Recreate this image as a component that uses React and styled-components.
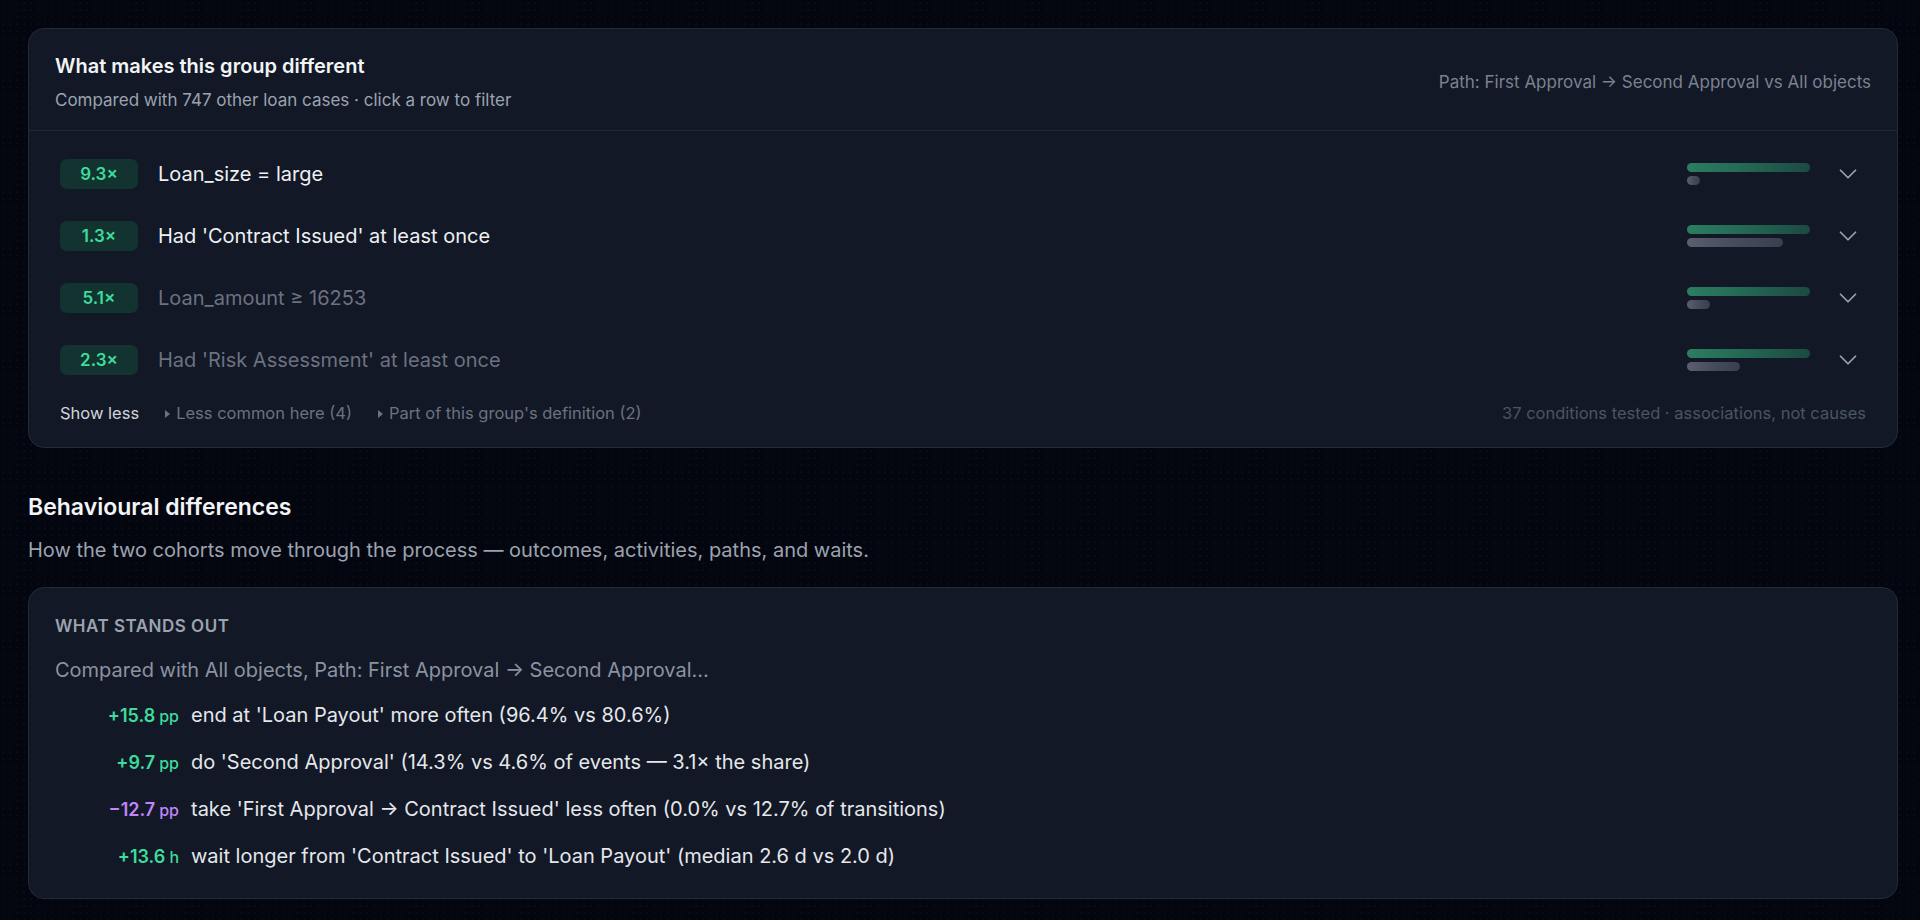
import React from "react"
import styled, { createGlobalStyle } from "styled-components"
import { ChevronDown } from "lucide-react"

const GlobalStyle = createGlobalStyle`
  * { box-sizing: border-box; }
  body {
    margin: 0;
    background-color: #03060f;
    background-image: radial-gradient(rgba(255, 255, 255, 0.03) 1px, transparent 1px);
    background-size: 7px 7px;
    font-family: Inter, Lato, "Noto Sans", sans-serif;
    color: #e5e7eb;
  }
`;

const Page = styled.main`
  padding: 28px 22px 28px 28px;
`;

const Card = styled.section`
  background: #121826;
  border: 1px solid #222b3a;
  border-radius: 16px;
`;

const Header = styled.header`
  display: flex;
  justify-content: space-between;
  align-items: center;
  padding: 24px 26px 20px 26px;
  border-bottom: 1px solid #1f2837;
`;

const Title = styled.h2`
  margin: 0;
  font-size: 20px;
  line-height: 26px;
  font-weight: 600;
  color: #f3f4f6;
`;

const Sub = styled.p`
  margin: 11px 0 0;
  font-size: 17px;
  line-height: 20px;
  color: #9ca3af;
`;

const Context = styled.span`
  font-size: 17px;
  color: #7b8290;
`;

const List = styled.div`
  padding-top: 12px;
`;

const Row = styled.div`
  display: flex;
  align-items: center;
  height: 62px;
  padding: 0 34px 0 31px;
  cursor: pointer;
`;

const Badge = styled.span`
  width: 78px;
  height: 30px;
  border-radius: 7px;
  background: #12332f;
  color: #3ddc9c;
  font-size: 17px;
  font-weight: 600;
  display: flex;
  align-items: center;
  justify-content: center;
  margin-right: 20px;
  flex-shrink: 0;
`;

const Label = styled.span`
  flex: 1;
  font-size: 20px;
  color: ${(p) => (p.$dim ? "#6b7280" : "#eef0f3")};
`;

const Bars = styled.div`
  width: 123px;
  display: flex;
  flex-direction: column;
  gap: 4px;
  margin-right: 23px;
`;

const Bar = styled.div`
  height: 9px;
  border-radius: 5px;
  background: ${(p) =>
    p.$kind === "group"
      ? "linear-gradient(90deg, #2b7d61 0%, #256b56 40%, #1c4a42 100%)"
      : "linear-gradient(90deg, #5a5f6f 0%, #474c5c 50%, #3a3f4f 100%)"};
`;

const Chevron = styled(ChevronDown)`
  color: #9ca3af;
  flex-shrink: 0;
`;

const Footer = styled.div`
  display: flex;
  align-items: center;
  gap: 26px;
  padding: 10px 31px 22px 31px;
  font-size: 16.5px;
  line-height: 24px;
`;

const ShowLess = styled.span`
  color: #d1d5db;
`;

const Toggle = styled.span`
  color: #6b7280;
  &::before {
    content: "";
    display: inline-block;
    border-left: 5px solid #6b7280;
    border-top: 4px solid transparent;
    border-bottom: 4px solid transparent;
    margin-right: 6px;
    vertical-align: 1px;
  }
`;

const Note = styled.span`
  margin-left: auto;
  color: #4b5563;
`;

const SectionTitle = styled.h2`
  margin: 45px 0 0;
  font-size: 23px;
  line-height: 28px;
  font-weight: 600;
  color: #f3f4f6;
`;

const SectionSub = styled.p`
  margin: 16px 0 24px;
  font-size: 20px;
  line-height: 26px;
  color: #9ca3af;
`;

const OutCard = styled(Card)`
  padding: 28px 26px 27px;
`;

const Eyebrow = styled.div`
  font-size: 17px;
  line-height: 20px;
  font-weight: 600;
  letter-spacing: 0.5px;
  color: #9ca3af;
`;

const Lead = styled.p`
  margin: 21px 0 18px;
  font-size: 20px;
  line-height: 26px;
  color: #8b93a1;
`;

const Items = styled.ul`
  list-style: none;
  margin: 0;
  padding: 0;
  display: flex;
  flex-direction: column;
  gap: 18px;
`;

const Item = styled.li`
  display: flex;
  align-items: baseline;
  gap: 12px;
  line-height: 28px;
`;

const Delta = styled.span`
  width: 124px;
  text-align: right;
  font-size: 18px;
  font-weight: 600;
  color: ${(p) => (p.$neg ? "#c084fc" : "#3ddc9c")};
`;

const Unit = styled.span`
  font-size: 16px;
  font-weight: 500;
  margin-left: 4px;
`;

const Text = styled.span`
  font-size: 20px;
  color: #e5e7eb;
`;

const rows = [
  { lift: "9.3×", label: "Loan_size = large", other: 13 },
  { lift: "1.3×", label: "Had 'Contract Issued' at least once", other: 96 },
  { lift: "5.1×", label: "Loan_amount ≥ 16253", other: 23, dim: true },
  { lift: "2.3×", label: "Had 'Risk Assessment' at least once", other: 53, dim: true },
]

const items = [
  { v: "+15.8", u: "pp", t: "end at 'Loan Payout' more often (96.4% vs 80.6%)" },
  { v: "+9.7", u: "pp", t: "do 'Second Approval' (14.3% vs 4.6% of events — 3.1× the share)" },
  { v: "−12.7", u: "pp", t: "take 'First Approval → Contract Issued' less often (0.0% vs 12.7% of transitions)", neg: true },
  { v: "+13.6", u: "h", t: "wait longer from 'Contract Issued' to 'Loan Payout' (median 2.6 d vs 2.0 d)" },
]

export default function App() {
  return (
    <>
      <GlobalStyle />
      <Page>
        <Card>
          <Header>
            <div>
              <Title>What makes this group different</Title>
              <Sub>Compared with 747 other loan cases · click a row to filter</Sub>
            </div>
            <Context>Path: First Approval → Second Approval vs All objects</Context>
          </Header>
          <List>
            {rows.map((r) => (
              <Row key={r.label}>
                <Badge>{r.lift}</Badge>
                <Label $dim={r.dim}>{r.label}</Label>
                <Bars>
                  <Bar $kind="group" />
                  <Bar $kind="other" style={{ width: r.other }} />
                </Bars>
                <Chevron size={30} strokeWidth={1.4} />
              </Row>
            ))}
          </List>
          <Footer>
            <ShowLess>Show less</ShowLess>
            <Toggle>Less common here (4)</Toggle>
            <Toggle>Part of this group's definition (2)</Toggle>
            <Note>37 conditions tested · associations, not causes</Note>
          </Footer>
        </Card>

        <SectionTitle>Behavioural differences</SectionTitle>
        <SectionSub>How the two cohorts move through the process — outcomes, activities, paths, and waits.</SectionSub>

        <OutCard>
          <Eyebrow>WHAT STANDS OUT</Eyebrow>
          <Lead>Compared with All objects, Path: First Approval → Second Approval…</Lead>
          <Items>
            {items.map((it) => (
              <Item key={it.t}>
                <Delta $neg={it.neg}>
                  {it.v}
                  <Unit>{it.u}</Unit>
                </Delta>
                <Text>{it.t}</Text>
              </Item>
            ))}
          </Items>
        </OutCard>
      </Page>
    </>
  )
}
